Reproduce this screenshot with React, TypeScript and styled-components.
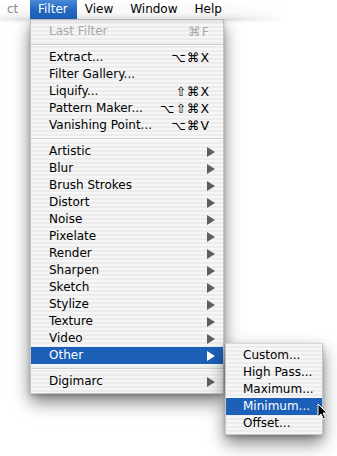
import React from 'react';
import styled, { createGlobalStyle, css } from 'styled-components';

const GlobalStyle = createGlobalStyle`
  html, body {
    margin: 0;
    padding: 0;
    background: #fff;
  }
  body {
    font-family: "DejaVu Sans", "Liberation Sans", sans-serif;
    font-size: 12px;
    color: #000;
  }
`;

const Page = styled.div`
  position: relative;
  width: 337px;
  height: 456px;
  overflow: hidden;
  background: #fff;
`;

const MenuBar = styled.div`
  position: relative;
  display: flex;
  height: 19px;
  background: linear-gradient(to bottom, #ffffff 0%, #f7f7f7 70%, #e2e2e2 100%);
  box-shadow: 0 1px 4px rgba(0, 0, 0, 0.22);
  z-index: 1;

  &::after {
    content: '';
    position: absolute;
    top: 0;
    bottom: -5px;
    left: 0;
    right: 0;
    pointer-events: none;
    background: linear-gradient(
      to right,
      rgba(255, 255, 255, 0.5) 0px,
      rgba(255, 255, 255, 0) 28px,
      rgba(255, 255, 255, 0) 225px,
      #fff 290px
    );
  }
`;

const MenuTitle = styled.div<{ $active?: boolean; $faded?: boolean; $width?: number }>`
  position: relative;
  z-index: 2;
  box-sizing: border-box;
  height: 19px;
  line-height: 19px;
  padding: 0 9px 0 8px;
  font-size: 12px;
  color: #000;
  ${p => p.$width && css`width: ${p.$width}px;`}
  ${p => p.$faded && css`color: #8a8a8a;`}
  ${p => p.$active && css`
    color: #fff;
    background: linear-gradient(to bottom, #4a8ad6 0%, #2369c2 50%, #1a5cb2 100%);
  `}
`;

const Menu = styled.div<{ $width: number }>`
  position: relative;
  box-sizing: border-box;
  width: ${p => p.$width}px;
  border: 1px solid #c4c4c4;
  border-top-color: #d6d6d6;
  padding: 3px 0;
  background: repeating-linear-gradient(
    to bottom,
    #f6f6f6 0px,
    #f6f6f6 2px,
    #ececec 2px,
    #ececec 4px
  );
  box-shadow: 0 8px 16px rgba(0, 0, 0, 0.5), 0 2px 4px rgba(0, 0, 0, 0.18);
`;

const MainMenu = styled(Menu)`
  margin-left: 30px;
`;

const SubMenu = styled(Menu)`
  position: absolute;
  top: -4px;
  left: calc(100% + 2px);
  padding: 3px 0 2px;
  z-index: 3;
`;

const Item = styled.div<{ $highlight?: boolean; $disabled?: boolean; $indent?: number }>`
  position: relative;
  display: flex;
  align-items: center;
  height: 17px;
  line-height: 17px;
  padding: 0 9px 0 ${p => p.$indent ?? 18}px;
  white-space: nowrap;
  color: ${p => (p.$disabled ? '#a8a8a8' : '#000')};
  ${p => p.$highlight && css`
    background: #1c60b8;
    color: #fff;
  `}
`;

const Label = styled.span`
  flex: 1;
`;

const Shortcut = styled.span`
  margin-right: 4px;
  font-size: 12.5px;
  letter-spacing: 1px;
`;

const Arrow = styled.span<{ $light?: boolean }>`
  width: 0;
  height: 0;
  margin-right: -1px;
  border-top: 5px solid transparent;
  border-bottom: 5px solid transparent;
  border-left: 8px solid ${p => (p.$light ? '#fff' : '#5e5e5e')};
`;

const Separator = styled.div`
  display: flex;
  align-items: center;
  height: 9px;

  &::before {
    content: '';
    flex: 1;
    height: 1px;
    background: #d0d0d0;
    box-shadow: 0 1px 0 #fbfbfb;
  }
`;

const Cursor = styled.svg`
  position: absolute;
  left: 317px;
  top: 403px;
  z-index: 5;
`;

type Entry =
  | { kind: 'sep' }
  | { kind: 'item'; label: string; keys?: string; sub?: boolean; disabled?: boolean; highlight?: boolean };

const entries: Entry[] = [
  { kind: 'item', label: 'Last Filter', keys: '⌘F', disabled: true },
  { kind: 'sep' },
  { kind: 'item', label: 'Extract...', keys: '⌥⌘X' },
  { kind: 'item', label: 'Filter Gallery...' },
  { kind: 'item', label: 'Liquify...', keys: '⇧⌘X' },
  { kind: 'item', label: 'Pattern Maker...', keys: '⌥⇧⌘X' },
  { kind: 'item', label: 'Vanishing Point...', keys: '⌥⌘V' },
  { kind: 'sep' },
  ...['Artistic', 'Blur', 'Brush Strokes', 'Distort', 'Noise', 'Pixelate', 'Render', 'Sharpen', 'Sketch', 'Stylize', 'Texture', 'Video'].map(
    (label): Entry => ({ kind: 'item', label, sub: true })
  ),
  { kind: 'item', label: 'Other', sub: true, highlight: true },
  { kind: 'sep' },
  { kind: 'item', label: 'Digimarc', sub: true },
];

const otherItems = ['Custom...', 'High Pass...', 'Maximum...', 'Minimum...', 'Offset...'];

function OtherSubMenu(): React.ReactElement {
  return (
    <SubMenu $width={98}>
      {otherItems.map(label => (
        <Item key={label} $indent={17} $highlight={label === 'Minimum...'}>
          <Label>{label}</Label>
        </Item>
      ))}
    </SubMenu>
  );
}

export default function App(): React.ReactElement {
  return (
    <Page>
      <GlobalStyle />
      <MenuBar>
        <MenuTitle $faded $width={30} style={{ paddingLeft: 7 }}>ct</MenuTitle>
        <MenuTitle $active>Filter</MenuTitle>
        <MenuTitle>View</MenuTitle>
        <MenuTitle>Window</MenuTitle>
        <MenuTitle>Help</MenuTitle>
      </MenuBar>

      <MainMenu $width={194}>
        {entries.map((e, i) =>
          e.kind === 'sep' ? (
            <Separator key={i} />
          ) : (
            <Item key={i} $disabled={e.disabled} $highlight={e.highlight}>
              <Label>{e.label}</Label>
              {e.keys && <Shortcut>{e.keys}</Shortcut>}
              {e.sub && <Arrow $light={e.highlight} />}
              {e.highlight && <OtherSubMenu />}
            </Item>
          )
        )}
      </MainMenu>

      <Cursor width="11" height="17" viewBox="0 0 11 17">
        <path
          d="M1 1 L1 14 L4 11 L6.5 16 L8.5 15 L6 10 L10 10 Z"
          fill="#000"
          stroke="#fff"
          strokeWidth="1"
          strokeLinejoin="round"
        />
      </Cursor>
    </Page>
  );
}
